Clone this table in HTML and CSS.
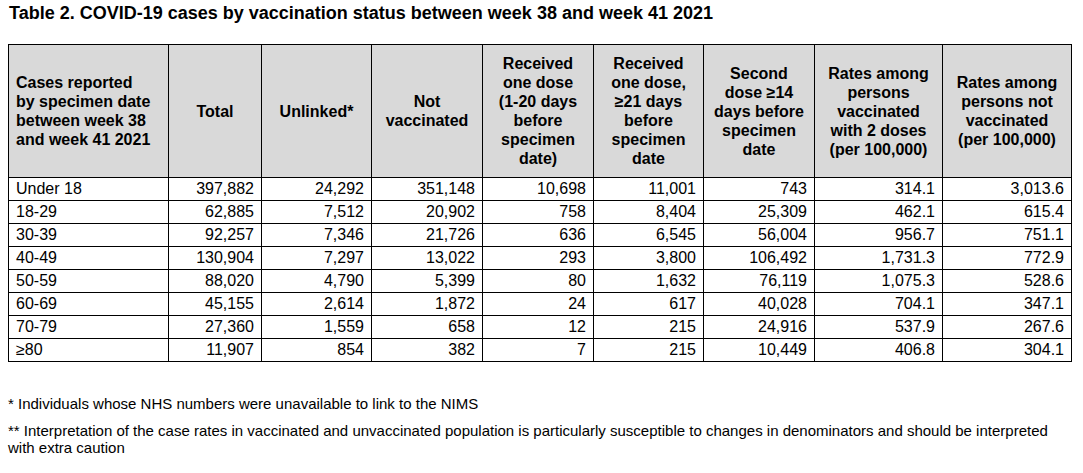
FILE: index.html
```html
<!DOCTYPE html>
<html lang="en">
<head>
<meta charset="utf-8">
<title>Table 2</title>
<link rel="stylesheet" href="styles.css">
</head>
<body>
<div class="page">
  <h1 class="title">Table 2. COVID-19 cases by vaccination status between week 38 and week 41 2021</h1>
  <table class="cases">
    <colgroup>
      <col class="c1"><col class="c2"><col class="c3"><col class="c4"><col class="c5"><col class="c6"><col class="c7"><col class="c8"><col class="c9">
    </colgroup>
    <thead>
      <tr>
        <th class="first">Cases reported<br>by specimen date<br>between week 38<br>and week 41 2021</th>
        <th>Total</th>
        <th>Unlinked*</th>
        <th>Not<br>vaccinated</th>
        <th>Received<br>one dose<br>(1-20 days<br>before<br>specimen<br>date)</th>
        <th>Received<br>one dose,<br>≥21 days<br>before<br>specimen<br>date</th>
        <th>Second<br>dose ≥14<br>days before<br>specimen<br>date</th>
        <th>Rates among<br>persons<br>vaccinated<br>with 2 doses<br>(per 100,000)</th>
        <th>Rates among<br>persons not<br>vaccinated<br>(per 100,000)</th>
      </tr>
    </thead>
    <tbody>
      <tr><td>Under 18</td><td>397,882</td><td>24,292</td><td>351,148</td><td>10,698</td><td>11,001</td><td>743</td><td>314.1</td><td>3,013.6</td></tr>
      <tr><td>18-29</td><td>62,885</td><td>7,512</td><td>20,902</td><td>758</td><td>8,404</td><td>25,309</td><td>462.1</td><td>615.4</td></tr>
      <tr><td>30-39</td><td>92,257</td><td>7,346</td><td>21,726</td><td>636</td><td>6,545</td><td>56,004</td><td>956.7</td><td>751.1</td></tr>
      <tr><td>40-49</td><td>130,904</td><td>7,297</td><td>13,022</td><td>293</td><td>3,800</td><td>106,492</td><td>1,731.3</td><td>772.9</td></tr>
      <tr><td>50-59</td><td>88,020</td><td>4,790</td><td>5,399</td><td>80</td><td>1,632</td><td>76,119</td><td>1,075.3</td><td>528.6</td></tr>
      <tr><td>60-69</td><td>45,155</td><td>2,614</td><td>1,872</td><td>24</td><td>617</td><td>40,028</td><td>704.1</td><td>347.1</td></tr>
      <tr><td>70-79</td><td>27,360</td><td>1,559</td><td>658</td><td>12</td><td>215</td><td>24,916</td><td>537.9</td><td>267.6</td></tr>
      <tr><td>≥80</td><td>11,907</td><td>854</td><td>382</td><td>7</td><td>215</td><td>10,449</td><td>406.8</td><td>304.1</td></tr>
    </tbody>
  </table>
  <div class="notes">
    <p class="note first-note">* Individuals whose NHS numbers were unavailable to link to the NIMS</p>
    <p class="note">** Interpretation of the case rates in vaccinated and unvaccinated population is particularly susceptible to changes in denominators and should be interpreted with extra caution</p>
  </div>
</div>
</body>
</html>
```

FILE: styles.css
```css
html, body {
  margin: 0;
  padding: 0;
  background: #ffffff;
}

.page {
  padding: 3px 8px 0 8px;
  font-family: "Liberation Sans", Arial, sans-serif;
  color: #000000;
}

.title {
  margin: 0 0 0 1px;
  font-size: 18px;
  line-height: 20px;
  font-weight: bold;
}

.cases {
  margin-top: 21px;
  border-collapse: collapse;
  table-layout: fixed;
  width: 1063px;
  font-size: 16px;
}

.c1 { width: 160px; }
.c2 { width: 93px; }
.c3 { width: 110px; }
.c4 { width: 111px; }
.c5 { width: 111px; }
.c6 { width: 110px; }
.c7 { width: 111px; }
.c8 { width: 128px; }
.c9 { width: 129px; }

.cases th,
.cases td {
  border: 1px solid #000000;
  padding: 0 7px;
  vertical-align: middle;
}

.cases th {
  background: #d9d9d9;
  font-weight: bold;
  text-align: center;
  line-height: 19px;
  height: 132px;
}

.cases th.first {
  text-align: left;
}

.cases td {
  height: 22px;
  line-height: 18px;
  text-align: right;
}

.cases td:first-child {
  text-align: left;
}

.notes {
  margin-top: 33px;
  width: 1060px;
}

.note {
  margin: 0;
  font-size: 15px;
  line-height: 17.5px;
}

.first-note {
  margin-bottom: 9px;
}
```
